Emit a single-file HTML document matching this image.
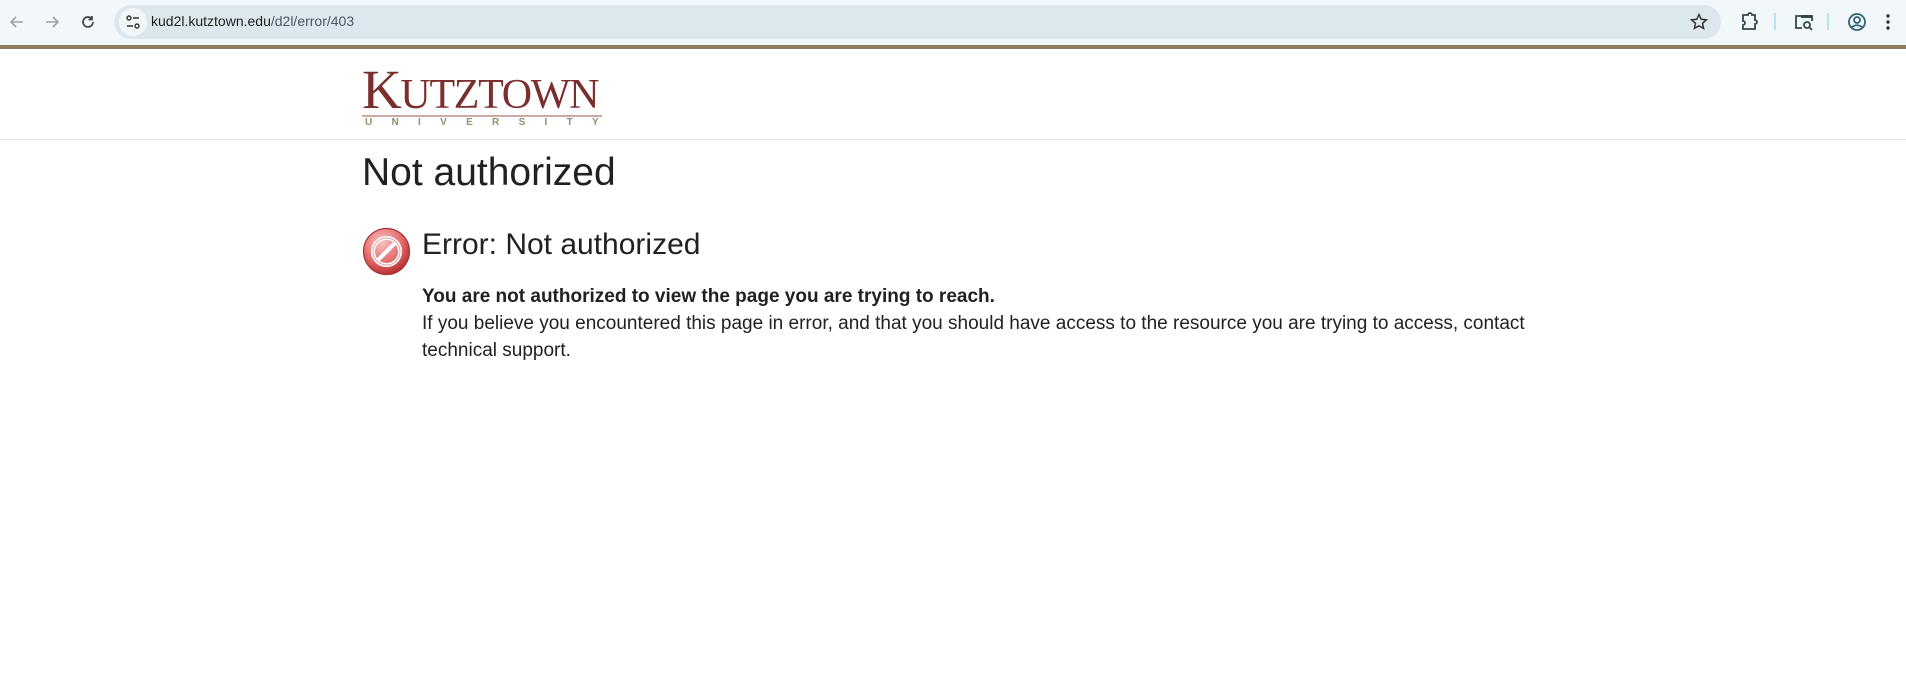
<!DOCTYPE html>
<html><head><meta charset="utf-8"><style>
*{margin:0;padding:0;box-sizing:border-box}
body{width:1906px;height:673px;overflow:hidden;background:#fff;font-family:"Liberation Sans",sans-serif;color:#202122;position:relative}
.tb{position:absolute;left:0;top:0;width:1906px;height:45px;background:#f2f7fa}
.url{position:absolute;left:114px;top:5px;width:1607px;height:34px;border-radius:17px;background:#dde8ee}
.tune{position:absolute;left:119px;top:8px;width:28px;height:28px;border-radius:14px;background:#f2f7fa}
.urltxt{position:absolute;left:151px;top:13px;font-size:14px;color:#1f1f1f}
.urltxt span{color:#4a5a63}
.brown{position:absolute;left:0;top:45px;width:1906px;height:4px;background:#8e7d5c}
.hdr{position:absolute;left:0;top:49px;width:1906px;height:91px;border-bottom:1px solid #e3e5e8}
.ico{position:absolute}
h1{position:absolute;left:362px;top:151px;font-size:39px;font-weight:400;color:#202122}
h2{position:absolute;left:422px;top:228px;font-size:30px;font-weight:400;color:#202122}
.p{position:absolute;left:422px;top:283px;font-size:19px;line-height:27px;width:1140px;color:#202122}
</style></head><body>
<div class="tb"></div>
<svg class="ico" style="left:8px;top:13px" width="18" height="18" viewBox="0 0 18 18"><path d="M15 9H3M8 4L3 9l5 5" stroke="#9aa3a8" stroke-width="1.6" fill="none"/></svg>
<svg class="ico" style="left:43px;top:13px" width="18" height="18" viewBox="0 0 18 18"><path d="M3 9h12M10 4l5 5-5 5" stroke="#9aa3a8" stroke-width="1.6" fill="none"/></svg>
<svg class="ico" style="left:79px;top:13px" width="18" height="18" viewBox="0 0 18 18"><path d="M14 9a5 5 0 1 1-1.5-3.6M13 3v3.5H9.5" stroke="#3c4448" stroke-width="1.7" fill="none"/></svg>
<div class="url"></div><div class="tune"></div>
<svg class="ico" style="left:124px;top:13px" width="18" height="18" viewBox="0 0 18 18"><circle cx="5" cy="5" r="2" stroke="#333" stroke-width="1.4" fill="none"/><path d="M9 5h6M3 13h6" stroke="#333" stroke-width="1.4"/><circle cx="13" cy="13" r="2" stroke="#333" stroke-width="1.4" fill="none"/></svg>
<div class="urltxt">kud2l.kutztown.edu<span>/d2l/error/403</span></div>
<svg class="ico" style="left:1689px;top:12px" width="20" height="20" viewBox="0 0 20 20"><path d="M10 2.5l2.2 4.8 5.2.5-3.9 3.5 1.1 5.1L10 13.8l-4.6 2.6 1.1-5.1L2.6 7.8l5.2-.5z" stroke="#333" stroke-width="1.5" fill="none"/></svg>
<svg class="ico" style="left:1738px;top:11px" width="22" height="22" viewBox="0 0 22 22"><path d="M5 4h5v-0a2 2 0 0 1 4 0v0h3v5a2 2 0 0 1 0 4v5H5v-4a2 2 0 0 0 0-4z" stroke="#33474f" stroke-width="1.8" fill="none"/></svg>
<div style="position:absolute;left:1774px;top:13px;width:2px;height:17px;background:#b3e3f5"></div>
<svg class="ico" style="left:1793px;top:11px" width="22" height="22" viewBox="0 0 22 22"><path d="M9 17H3V5h16v5" stroke="#33474f" stroke-width="1.8" fill="none"/><rect x="8" y="4" width="11" height="3" fill="#33474f"/><circle cx="14" cy="14" r="3" stroke="#33474f" stroke-width="1.8" fill="none"/><path d="M16 16l3 3" stroke="#33474f" stroke-width="1.8"/></svg>
<div style="position:absolute;left:1827px;top:13px;width:2px;height:17px;background:#b3e3f5"></div>
<svg class="ico" style="left:1846px;top:11px" width="22" height="22" viewBox="0 0 22 22"><circle cx="11" cy="11" r="8" stroke="#2f6474" stroke-width="1.8" fill="none"/><circle cx="11" cy="9" r="3" stroke="#2f6474" stroke-width="1.8" fill="none"/><path d="M5.5 16.5c3-3 8-3 11 0" stroke="#2f6474" stroke-width="1.8" fill="none"/></svg>
<svg class="ico" style="left:1884px;top:12px" width="8" height="20" viewBox="0 0 8 20"><circle cx="4" cy="4" r="1.7" fill="#333"/><circle cx="4" cy="10" r="1.7" fill="#333"/><circle cx="4" cy="16" r="1.7" fill="#333"/></svg>
<div class="brown"></div>
<div class="hdr"></div>
<div style="position:absolute;left:362px;top:65px;font-family:'Liberation Serif',serif;color:#7b2f2c;white-space:nowrap;letter-spacing:-1.3px">
<span style="font-size:55px;line-height:50px">K</span><span style="font-size:42px;line-height:50px">UTZTOWN</span></div>
<div style="position:absolute;left:362px;top:115px;width:240px;height:2px;background:#c9aaa4"></div>
<div style="position:absolute;left:365px;top:117px;font-size:10px;color:#9b8d6a;letter-spacing:19.3px;white-space:nowrap;font-weight:bold">UNIVERSITY</div>
<h1>Not authorized</h1>
<svg class="ico" style="left:362px;top:227px" width="49" height="49" viewBox="0 0 49 49"><defs><radialGradient id="g" cx="40%" cy="30%" r="70%"><stop offset="0" stop-color="#f9c2c2"/><stop offset=".6" stop-color="#e46f6f"/><stop offset="1" stop-color="#b83232"/></radialGradient></defs><circle cx="24.5" cy="24.5" r="23" fill="url(#g)" stroke="#a33" stroke-width="1.2"/><circle cx="24.5" cy="24.5" r="13.5" fill="none" stroke="#fff" stroke-width="4"/><path d="M15 34L34 15" stroke="#fff" stroke-width="4"/><circle cx="24.5" cy="24.5" r="13.5" fill="none" stroke="#b84444" stroke-width="1" opacity=".5"/></svg>
<h2>Error: Not authorized</h2>
<div class="p"><b>You are not authorized to view the page you are trying to reach.</b><br>If you believe you encountered this page in error, and that you should have access to the resource you are trying to access, contact technical support.</div>
</body></html>
